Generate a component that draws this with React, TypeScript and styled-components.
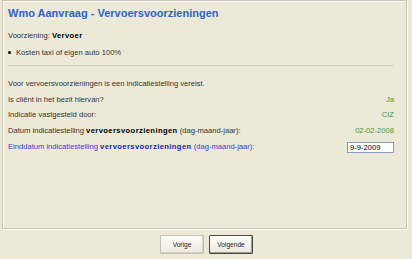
import styled, { createGlobalStyle } from "styled-components";

const GlobalStyle = createGlobalStyle`
  html, body {
    margin: 0;
    padding: 0;
    background-color: #ece9d8;
  }
  body {
    width: 412px;
    height: 259px;
    overflow: hidden;
    font-family: "Liberation Sans", Arial, sans-serif;
  }
`;

const Page = styled.div`
  display: flex;
  flex-direction: column;
  height: 259px;
  padding: 0 5px 0 2px;
  box-sizing: border-box;
`;

const Panel = styled.div`
  height: 229px;
  box-sizing: border-box;
  border: 1px solid #c9c6b5;
  box-shadow: inset 1px 1px 0 #fbfaf5, 1px 1px 0 #fbfaf5;
  padding: 4px 12px 0 5px;
  display: flex;
  flex-direction: column;
`;

const Title = styled.h1`
  margin: 0 0 7px;
  font-size: 11px;
  font-weight: bold;
  color: #2f64c8;
  line-height: 16px;
`;

const Row = styled.div<{ $tone?: "blue" }>`
  display: flex;
  align-items: center;
  justify-content: space-between;
  font-size: 7.6px;
  line-height: 10px;
  min-height: 15.5px;
  color: ${(p) => (p.$tone === "blue" ? "#3a3ae0" : "#333")};

  b {
    letter-spacing: 0.4px;
    color: ${(p) => (p.$tone === "blue" ? "#2020c0" : "#000")};
  }
`;

const EndRow = styled(Row)`
  margin-top: 1px;
`;

const BulletList = styled.ul`
  margin: 3px 0 0;
  padding: 0;
  list-style: none;
`;

const Bullet = styled.li`
  display: flex;
  align-items: center;
  gap: 5px;
  font-size: 7.6px;
  line-height: 12px;
  color: #333;

  &::before {
    content: "";
    width: 3px;
    height: 3px;
    border-radius: 50%;
    background: #000;
  }
`;

const Divider = styled.hr`
  margin: 6px 0 11px;
  border: 0;
  border-top: 1px solid #d2cfbf;
  height: 0;
`;

const Value = styled.span`
  color: #3f9a3a;
`;

const DateInput = styled.input`
  width: 47px;
  height: 11px;
  box-sizing: border-box;
  border: 1px solid #7f9db9;
  background: #fff;
  font-family: "Liberation Sans", Arial, sans-serif;
  font-size: 7.6px;
  padding: 0 2px;
  color: #000;
  outline: none;
`;

const Footer = styled.div`
  display: flex;
  justify-content: center;
  gap: 5px;
  padding: 6px 0 0 4px;
`;

const Button = styled.button<{ $primary?: boolean }>`
  width: 44px;
  height: 19px;
  padding: 0;
  font-family: "Liberation Sans", Arial, sans-serif;
  font-size: 6.6px;
  color: #222;
  background: linear-gradient(#fdfdfb, #ece9e0);
  border: 1px solid ${(p) => (p.$primary ? "#4a4a44" : "#c2c0b4")};
  box-shadow: ${(p) =>
    p.$primary ? "inset -1px -1px 0 #9d9b90" : "inset -1px -1px 0 #d6d3c6"};
  border-radius: 1px;
`;

export default function App() {
  return (
    <>
      <GlobalStyle />
      <Page>
        <Panel>
          <Title>Wmo Aanvraag - Vervoersvoorzieningen</Title>
          <Row>
            <span>
              Voorziening: <b>Vervoer</b>
            </span>
          </Row>
          <BulletList>
            <Bullet>Kosten taxi of eigen auto 100%</Bullet>
          </BulletList>
          <Divider />
          <Row>
            <span>Voor vervoersvoorzieningen is een indicatiestelling vereist.</span>
          </Row>
          <Row>
            <span>Is cliënt in het bezit hiervan?</span>
            <Value>Ja</Value>
          </Row>
          <Row>
            <span>Indicatie vastgesteld door:</span>
            <Value>CIZ</Value>
          </Row>
          <Row>
            <span>
              Datum indicatiestelling <b>vervoersvoorzieningen</b> (dag-maand-jaar):
            </span>
            <Value>02-02-2008</Value>
          </Row>
          <EndRow $tone="blue">
            <span>
              Einddatum indicatiestelling <b>vervoersvoorzieningen</b> (dag-maand-jaar):
            </span>
            <DateInput defaultValue="9-9-2009" />
          </EndRow>
        </Panel>
        <Footer>
          <Button>Vorige</Button>
          <Button $primary>Volgende</Button>
        </Footer>
      </Page>
    </>
  );
}
